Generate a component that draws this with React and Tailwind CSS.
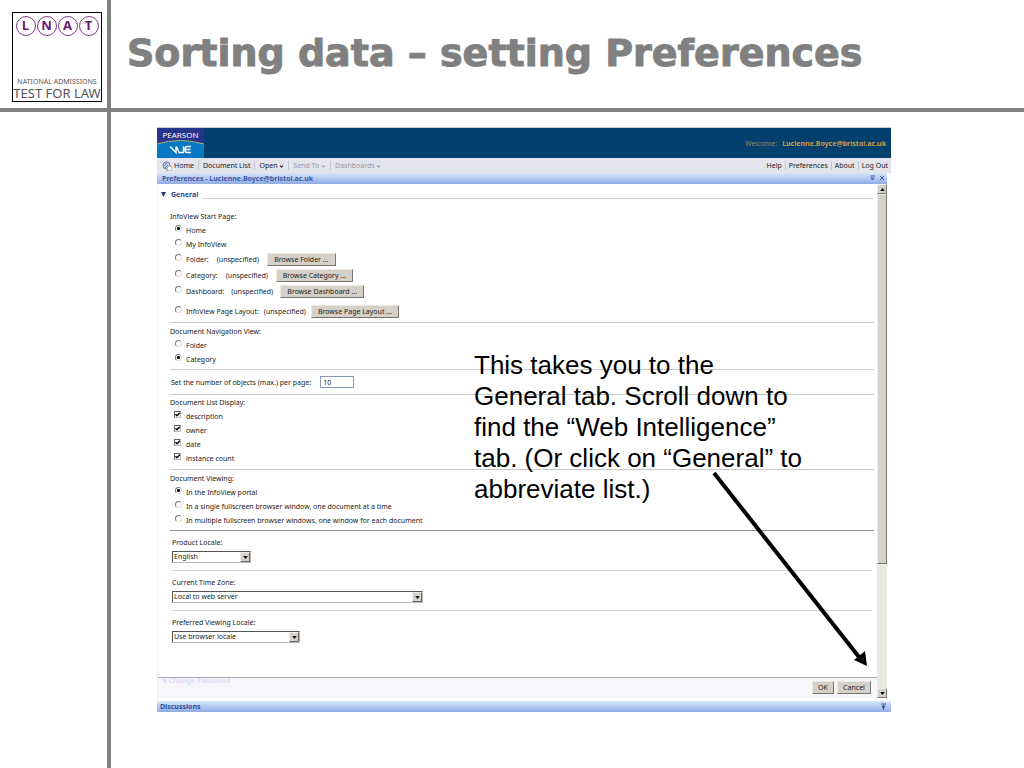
import { ChevronDown } from 'lucide-react';

const startPages = [
  { label: 'Folder:', gap: 'gap-[8px]', button: 'Browse Folder ...', row: 'h-4', width: 'w-[69px]' },
  { label: 'Category:', gap: 'gap-[8px]', button: 'Browse Category ...', row: 'h-4', width: 'w-[77px]' },
  { label: 'Dashboard:', gap: 'gap-[7px]', button: 'Browse Dashboard ...', row: 'h-4', width: 'w-[84px]' },
  { label: 'InfoView Page Layout:', gap: 'gap-[5px]', button: 'Browse Page Layout ...', row: 'mt-1 h-4', width: 'w-[88px]' },
];

const viewingModes = [
  'In the InfoView portal',
  'In a single fullscreen browser window, one document at a time',
  'In multiple fullscreen browser windows, one window for each document',
];

function Radio({ name, label, checked }) {
  return (
    <label className="flex items-center gap-1 pl-[5px]">
      <input
        type="radio"
        name={name}
        defaultChecked={checked}
        className="mb-[3px] size-[7px] appearance-none rounded-full border border-t-[#777] border-l-[#777] border-r-[#ddd] border-b-[#ddd] bg-white checked:bg-[radial-gradient(#000_1px,transparent_2px)]"
      />
      {label}
    </label>
  );
}

function Check({ label }) {
  return (
    <label className="flex h-3.5 items-center gap-[5px] pl-1">
      <span className="mb-[3px] grid">
        <input
          type="checkbox"
          defaultChecked
          className="col-start-1 row-start-1 size-[7px] appearance-none border border-t-[#666] border-l-[#666] border-r-[#bbb] border-b-[#bbb] bg-white"
        />
        <svg viewBox="0 0 7 7" className="pointer-events-none col-start-1 row-start-1 size-[7px]">
          <path d="M1.5 3.2 L3 4.8 L5.8 1.8" fill="none" stroke="#000" strokeWidth="1.4" />
        </svg>
      </span>
      {label}
    </label>
  );
}

function Button({ children, width }) {
  return (
    <button
      className={`h-[13px] border border-t-[#ece9e4] border-l-[#ece9e4] border-r-[#77756f] border-b-[#77756f] bg-[#d5d1c8] text-center leading-[11px] whitespace-nowrap text-[#222] ${width}`}
    >
      {children}
    </button>
  );
}

function LocaleSelect({ id, label, value, width, last }) {
  return (
    <div className={`mr-[5px] ml-[14px] pt-[6px] pb-[7px] ${last ? '' : 'border-b border-[#d0d0d0]'}`}>
      <label htmlFor={id} className="block h-3 leading-3">{label}</label>
      <div className={`mt-0.5 grid h-3 border border-t-[#555] border-l-[#555] border-r-[#bbb] border-b-[#bbb] bg-white ${width}`}>
        <select id={id} className="col-start-1 row-start-1 appearance-none pl-px leading-[10px]">
          <option>{value}</option>
        </select>
        <span className="pointer-events-none col-start-1 row-start-1 flex w-[10px] items-center justify-center justify-self-end border border-t-[#eee] border-l-[#eee] border-r-[#666] border-b-[#666] bg-[#d5d1c8]">
          <svg viewBox="0 0 6 4" className="h-[3px] w-[5px]"><path d="M0 0h6L3 4z" /></svg>
        </span>
      </div>
    </div>
  );
}

function Logo() {
  return (
    <div className="flex h-[90px] w-[90px] flex-col border border-black pt-[3px] whitespace-nowrap">
      <div className="flex justify-center gap-px">
        {['L', 'N', 'A', 'T'].map((letter) => (
          <span
            key={letter}
            className="flex size-5 items-center justify-center rounded-full border border-[#7d3c86] font-['Open_Sans',sans-serif] text-[13px] font-bold text-[#6a1a74]"
          >
            {letter}
          </span>
        ))}
      </div>
      <div className="mt-auto flex flex-col items-center font-['Noto_Sans',sans-serif] text-[#555]">
        <span className="text-[7px] leading-[9px]">NATIONAL ADMISSIONS</span>
        <span className="text-[13px] leading-[15px]">TEST FOR LAW</span>
      </div>
    </div>
  );
}

function PearsonLogo() {
  return (
    <div className="flex h-full w-[47px] flex-col bg-[#27348b] text-center text-white">
      <span className="h-3 font-['Open_Sans',sans-serif] text-[8px] leading-[13px]">PEARSON</span>
      <svg viewBox="0 0 47 18" className="h-[18px] w-full">
        <path d="M0 4 Q23 -3 47 4 V18 H0z" fill="#0877c4" />
        <path d="M0 4 Q23 -3 47 4" fill="none" stroke="#a9b76a" />
        <path
          d="M13 6.500 L19 12.500 V6.500 M19.500 6.500 L22 12.500 H26.500 V6.500 M34 6.500 H30 Q28 6.500 28 9.500 Q28 12.500 30 12.500 H34 M28 9.500 H33.500"
          fill="none"
          stroke="#fff"
          strokeWidth="1.400"
        />
      </svg>
    </div>
  );
}

function Divider() {
  return <span className="h-[9px] w-px bg-[#c4c4cc]" />;
}

function MenuLink({ children, muted }) {
  return <a href="#" className={muted ? 'text-[#9a9aa4]' : 'text-[#222]'}>{children}</a>;
}

function Toolbar() {
  return (
    <nav className="flex h-[15px] items-center justify-between bg-[#e4e4ec] pr-[3px] pl-[5px]">
      <div className="flex items-center gap-1">
        <a href="#" className="flex items-center gap-0.5 text-[#222]">
          <svg viewBox="0 0 10 10" className="size-[10px]">
            <circle cx="4.500" cy="4.500" r="3.500" fill="#cfdcf0" stroke="#5a78b0" />
            <path d="M2 5 L5 2 M3 7 L6 4" stroke="#5a78b0" fill="none" />
            <path d="M5 6.500 L7.500 4.500 L10 6.500 V10 H5z" fill="#fff" stroke="#777" strokeWidth=".8" />
          </svg>
          Home
        </a>
        <Divider />
        <MenuLink>Document List</MenuLink>
        <Divider />
        <MenuLink>Open <ChevronDown className="inline size-[5px]" strokeWidth={5} /></MenuLink>
        <Divider />
        <MenuLink muted>Send To <ChevronDown className="inline size-[5px]" strokeWidth={5} /></MenuLink>
        <Divider />
        <MenuLink muted>Dashboards <ChevronDown className="inline size-[5px]" strokeWidth={5} /></MenuLink>
      </div>
      <div className="flex items-center gap-[3px]">
        <MenuLink>Help</MenuLink>
        <Divider />
        <MenuLink>Preferences</MenuLink>
        <Divider />
        <MenuLink>About</MenuLink>
        <Divider />
        <MenuLink>Log Out</MenuLink>
      </div>
    </nav>
  );
}

function Scrollbar() {
  return (
    <div className="flex w-[10px] flex-col bg-[#e9e8e3]">
      <span className="flex h-[10px] items-center justify-center border border-t-[#eee] border-l-[#eee] border-r-[#777] border-b-[#777] bg-[#d5d1c8]">
        <svg viewBox="0 0 6 4" className="h-[3px] w-[5px]"><path d="M0 4h6L3 0z" /></svg>
      </span>
      <span className="h-[370px] border border-t-[#eee] border-l-[#eee] border-r-[#77756f] border-b-[#77756f] bg-[#d5d1c8]" />
      <span className="mt-auto flex h-[10px] items-center justify-center border border-t-[#eee] border-l-[#eee] border-r-[#777] border-b-[#777] bg-[#d5d1c8]">
        <svg viewBox="0 0 6 4" className="h-[3px] w-[5px]"><path d="M0 0h6L3 4z" /></svg>
      </span>
    </div>
  );
}

function Preferences() {
  return (
    <form className="flex min-w-0 flex-1 flex-col">
      <div className="flex h-5 items-center">
        <svg viewBox="0 0 6 6" className="ml-[3px] size-[5px]"><path d="M0 0h6L3 6z" fill="#1f3f7a" /></svg>
        <h2 className="mr-1 ml-[5px] font-bold text-[#2a4a94]">General</h2>
        <span className="mt-[9px] mr-1 h-px flex-1 bg-[#d0d0d0]" />
      </div>

      <fieldset className="mr-[3px] ml-3 border-b border-[#c8c8c8] pb-[3px]">
        <legend className="h-[19px] pt-[6px]">InfoView Start Page:</legend>
        <div className="flex h-3.5 items-center"><Radio name="start" label="Home" checked /></div>
        <div className="flex h-3.5 items-center"><Radio name="start" label="My InfoView" /></div>
        {startPages.map((page) => (
          <div key={page.label} className={`flex items-center ${page.gap} ${page.row}`}>
            <Radio name="start" label={page.label} />
            <span>(unspecified)</span>
            <Button width={page.width}>{page.button}</Button>
          </div>
        ))}
      </fieldset>

      <fieldset className="mr-[3px] ml-3 border-b border-[#c8c8c8] pb-[3px]">
        <legend className="h-[15px] pt-0.5">Document Navigation View:</legend>
        <div className="flex h-3.5 items-center"><Radio name="nav" label="Folder" /></div>
        <div className="flex h-3.5 items-center"><Radio name="nav" label="Category" checked /></div>
      </fieldset>

      <div className="mr-[3px] ml-3 flex h-[25px] items-center gap-[9px] border-b border-[#c8c8c8] pl-px">
        <label htmlFor="per-page">Set the number of objects (max.) per page:</label>
        <input id="per-page" defaultValue="10" className="h-3 w-[34px] border border-[#8a9ab8] bg-white pl-0.5" />
      </div>

      <fieldset className="mr-[3px] ml-3 border-b border-[#c8c8c8] pb-1">
        <legend className="h-3.5 pt-px">Document List Display:</legend>
        <Check label="description" />
        <Check label="owner" />
        <Check label="date" />
        <Check label="instance count" />
      </fieldset>

      <fieldset className="mr-[3px] ml-3 border-b border-[#909090] pb-[3px]">
        <legend className="h-[15px] pt-0.5">Document Viewing:</legend>
        {viewingModes.map((mode, i) => (
          <div key={mode} className="flex h-3.5 items-center"><Radio name="viewing" label={mode} checked={i === 0} /></div>
        ))}
      </fieldset>

      <LocaleSelect id="product" label="Product Locale:" value="English" width="w-[79px]" />
      <LocaleSelect id="zone" label="Current Time Zone:" value="Local to web server" width="w-[251px]" />
      <LocaleSelect id="viewing-locale" label="Preferred Viewing Locale:" value="Use browser locale" width="w-[128px]" last />

      <div className="mt-[27px] flex h-[21px] justify-between border-t border-[#a8a8a8] bg-[#f6f6fb] pr-[6px]">
        <span className="h-[6px] pl-[5px] leading-[6px] font-bold text-[#dcdcf0]">▾ Change Password</span>
        <span className="flex items-center gap-[3px] pb-0.5">
          <Button width="w-[22px]">OK</Button>
          <Button width="w-[34px]">Cancel</Button>
        </span>
      </div>
    </form>
  );
}

function InfoView() {
  return (
    <section className="border-t border-[#c9ccd0] font-['Noto_Sans',sans-serif] text-[7px] leading-[13px] text-[#222]">
      <header className="flex h-[30px] items-center justify-between bg-[#04406e] pr-[5px]">
        <PearsonLogo />
        <p className="flex gap-[5px] text-[#8f8a6c]">
          Welcome: <strong className="text-[#c99a45]">Lucienne.Boyce@bristol.ac.uk</strong>
        </p>
      </header>
      <Toolbar />
      <div className="mr-1">
        <div className="flex h-[11px] items-center justify-between bg-linear-to-b from-[#dbe6fb] to-[#91abe3] pr-0.5 pl-[5px] text-[#3a5aa8]">
          <h2 className="font-bold">Preferences - Lucienne.Boyce@bristol.ac.uk</h2>
          <svg viewBox="0 0 16 7" className="h-[7px] w-4" fill="none" stroke="currentColor">
            <path d="M1 1h5 M2 3l1.500 2L5 3z M11 1l4 4 M15 1l-4 4" />
          </svg>
        </div>
        <div className="flex border-l border-[#eeeef4]">
          <Preferences />
          <Scrollbar />
        </div>
      </div>
      <footer className="mt-[3px] flex h-[11px] items-center justify-between bg-linear-to-b from-[#dbe6fb] to-[#91abe3] pr-1 pl-[3px] text-[#2f4f9c]">
        <h2 className="font-bold">Discussions</h2>
        <svg viewBox="0 0 7 7" className="size-[7px]" fill="none" stroke="currentColor">
          <path d="M1 1h5 M2 4l1.500-2L5 4z M3.500 3v4" />
        </svg>
      </footer>
    </section>
  );
}

export default function App() {
  return (
    <div className="flex min-h-screen flex-col bg-white">
      <header className="flex h-28 border-b-4 border-[#808080]">
        <div className="w-[111px] shrink-0 border-r-4 border-[#808080] pt-3 pl-3">
          <Logo />
        </div>
        <h1 className="pt-[29px] pl-4 font-['DejaVu_Sans',sans-serif] text-[38px] leading-[48px] font-black whitespace-nowrap text-[#808080] [-webkit-text-stroke:1px_#808080]">
          Sorting data – setting Preferences
        </h1>
      </header>

      <div className="flex flex-1">
        <div className="w-[111px] shrink-0 border-r-4 border-[#808080]" />
        <main className="relative flex-1 pt-[15px] pr-[133px] pl-[46px]">
          <InfoView />

          {/* slide annotation on top of the app window */}
          <p className="absolute top-[238px] left-[363px] w-[330px] font-['Liberation_Sans',sans-serif] text-[26px] leading-[31px] text-black">
            This takes you to the General tab. Scroll down to find the “Web Intelligence” tab. (Or click on “General” to abbreviate list.)
          </p>
          <svg viewBox="0 0 160 200" className="absolute top-[358px] left-[600px] h-[200px] w-40">
            <path d="M3 3 L148 187" stroke="#000" strokeWidth="4" />
            <path d="M156 196 L143 190 L154 181z" />
          </svg>
        </main>
      </div>
    </div>
  );
}
